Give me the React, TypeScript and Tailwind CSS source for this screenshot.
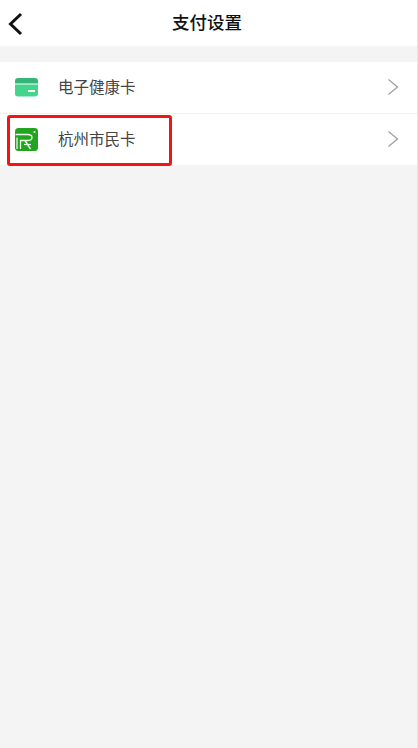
export default function App() {
  const font = { fontFamily: '"Noto Sans CJK SC", sans-serif' };
  const chevron = (
    <svg width="12" height="18" viewBox="0 0 12 18" fill="none" className="mr-[18px] mb-[1px]">
      <path d="M1.5 1.5L10.5 9L1.5 16.5" stroke="#a0a0a0" strokeWidth="1.3" />
    </svg>
  );
  return (
    <div className="relative flex h-[748px] w-[418px] flex-col overflow-hidden border-r border-[#e4e4e4] bg-[#f4f4f4]" style={font}>
      <header className="relative flex h-[46px] items-center justify-center bg-white pb-[2px] pr-[3px]">
        <svg width="16" height="24" viewBox="0 0 16 24" fill="none" className="absolute left-[7px] top-[12px]">
          <path d="M14 2L3.5 12L14 22" stroke="#111111" strokeWidth="3" />
        </svg>
        <span className="text-[17.5px] font-medium leading-none text-[#111111]">支付设置</span>
      </header>
      <div className="mt-4 flex flex-col bg-white">
        <div className="flex h-[51px] items-center justify-between border-b border-[#f0f0f0] box-content">
          <div className="flex items-center">
            <svg width="23" height="19" viewBox="0 0 23 19" className="ml-[15px]">
              <path d="M0 6.5H23V15.5A3 3 0 0 1 20 18.5H3A3 3 0 0 1 0 15.5Z" fill="#43d68a" />
              <path d="M0 5.5V3A3 3 0 0 1 3 0H20A3 3 0 0 1 23 3V5.5Z" fill="#37b477" />
              <rect x="13" y="12" width="7" height="2" fill="#ffffff" />
            </svg>
            <span className="ml-[20px] pb-[2px] text-[15.5px] text-[#444444]">电子健康卡</span>
          </div>
          {chevron}
        </div>
        <div className="flex h-[51px] items-center justify-between">
          <div className="flex items-center">
            <svg width="23" height="23" viewBox="0 0 23 23" fill="none" className="ml-[15px]">
              <rect width="23" height="23" rx="3.5" fill="#22a41f" />
              <path d="M0.5 6.5H12.5C18.5 6.5 18.5 12.5 12.5 12.5H5.5V21" stroke="#e9f7e8" strokeWidth="1.3" />
              <path d="M2 9.5V21" stroke="#e9f7e8" strokeWidth="1.3" />
              <path d="M10 12.5L15.5 21" stroke="#e9f7e8" strokeWidth="1.4" />
              <path d="M9 16.5H16" stroke="#e9f7e8" strokeWidth="1.2" />
              <circle cx="19.5" cy="4" r="1" fill="#ffffff" />
            </svg>
            <span className="ml-[20px] pb-[2px] text-[15.5px] text-[#444444]">杭州市民卡</span>
          </div>
          {chevron}
        </div>
      </div>
      <div className="absolute left-[7px] top-[115px] h-[51px] w-[165px] rounded-[3px] border-[3px] border-[#f51414]" />
    </div>
  );
}
